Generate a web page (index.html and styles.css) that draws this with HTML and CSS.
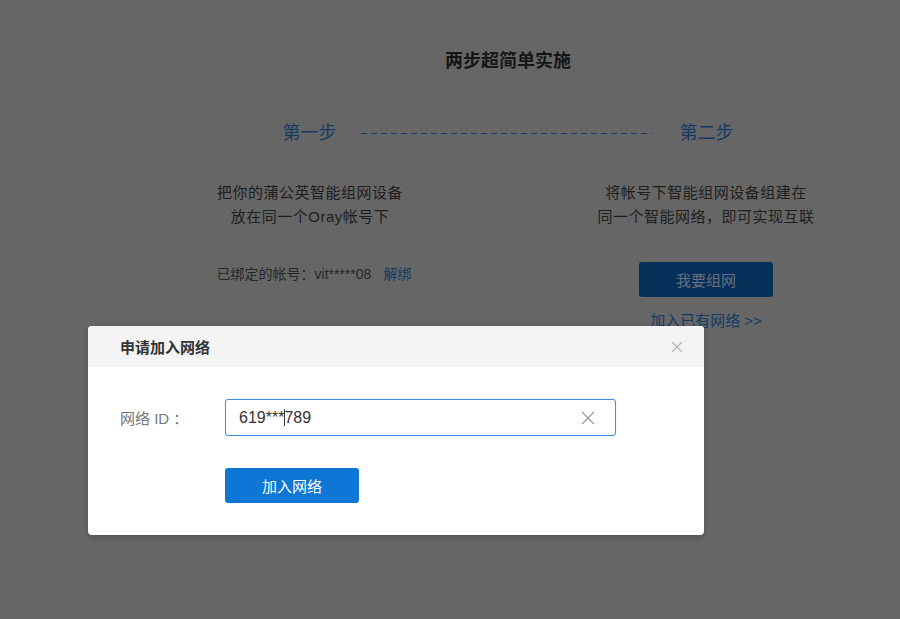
FILE: index.html
```html
<!DOCTYPE html>
<html lang="zh-CN">
<head>
    <meta charset="UTF-8">
    <title>智能组网</title>
    <link rel="stylesheet" href="styles.css">
</head>
<body>

    <div class="page">
        <h2 class="page-title">两步超简单实施</h2>

        <div class="steps">
            <span class="step-name">第一步</span>
            <span class="step-line"></span>
            <span class="step-name">第二步</span>
        </div>

        <div class="columns">
            <div class="col">
                <p class="desc">把你的蒲公英智能组网设备<br>放在同一个Oray帐号下</p>
                <p class="account">已绑定的帐号：vit*****08<a href="#" class="unbind">解绑</a></p>
            </div>
            <div class="col">
                <p class="desc">将帐号下智能组网设备组建在<br>同一个智能网络，即可实现互联</p>
                <button class="btn-create">我要组网</button>
                <a href="#" class="join-link">加入已有网络 &gt;&gt;</a>
            </div>
        </div>
    </div>

    <!-- Join network dialog -->
    <div class="dialog">
        <div class="dialog-head">
            <span class="dialog-title">申请加入网络</span>
            <span class="dialog-close">
                <svg width="12" height="12" viewBox="0 0 12 12"><path d="M1 1L11 11M11 1L1 11" stroke="#b4b4b4" stroke-width="1.3" fill="none"/></svg>
            </span>
        </div>
        <div class="dialog-body">
            <div class="form-row">
                <label class="form-label">网络 ID ：</label>
                <div class="field">
                    <span class="field-value">619***<span class="caret"></span>789</span>
                    <svg class="field-clear" width="14" height="14" viewBox="0 0 14 14"><path d="M1 1L13 13M13 1L1 13" stroke="#9a9a9a" stroke-width="1.3" fill="none"/></svg>
                </div>
            </div>
            <div class="form-row">
                <span class="form-label"></span>
                <button class="btn-join">加入网络</button>
            </div>
        </div>
    </div>

</body>
</html>
```

FILE: styles.css
```css
body {
    margin: 0;
    background-color: #666666;
    font-family: "Liberation Sans", "Noto Sans CJK SC", sans-serif;
    color: #1c1c1c;
    height: 619px;
    overflow: hidden;
}

.page {
    width: 656px;
    margin-left: 180px;
    padding-top: 49px;
}

.page-title {
    margin: 0;
    font-size: 18px;
    line-height: 24px;
    text-align: center;
    color: #161616;
}

/* Steps */
.steps {
    display: flex;
    align-items: center;
    justify-content: center;
    margin-top: 48px;
    line-height: 24px;
}

.step-name {
    font-size: 18px;
    color: #143a63;
}

.step-line {
    width: 291px;
    height: 1px;
    margin: 0 28px 0 24px;
    background-image: repeating-linear-gradient(to right, #183f6a 0 6px, transparent 6px 10px);
}

.columns {
    display: flex;
    justify-content: space-between;
    margin-top: 36px;
}

.col {
    width: 260px;
    display: flex;
    flex-direction: column;
    align-items: center;
}

.desc {
    margin: 0;
    font-size: 15px;
    letter-spacing: 0.5px;
    line-height: 24px;
    text-align: center;
    color: #1e1e1e;
}

.account {
    margin: 33px 0 0 8px;
    font-size: 14px;
    line-height: 24px;
    color: #262626;
}

.unbind {
    margin-left: 12px;
    color: #143a63;
    text-decoration: none;
}

.btn-create {
    margin-top: 33px;
    width: 134px;
    height: 35px;
    border: none;
    border-radius: 3px;
    background-color: #06305a;
    color: #66707e;
    font-family: inherit;
    font-size: 15px;
}

.join-link {
    margin-top: 12px;
    font-size: 15px;
    line-height: 24px;
    color: #143a63;
    text-decoration: none;
}

/* Dialog */
.dialog {
    position: absolute;
    left: 88px;
    top: 326px;
    width: 616px;
    height: 209px;
    background-color: #ffffff;
    border-radius: 4px;
    overflow: hidden;
    box-shadow: 0 2px 6px rgba(0, 0, 0, 0.2);
}

.dialog-head {
    display: flex;
    align-items: center;
    justify-content: space-between;
    height: 41px;
    padding: 0 21px 0 32px;
    background-color: #f4f4f4;
}

.dialog-title {
    font-size: 15px;
    font-weight: bold;
    color: #333333;
}

.dialog-close {
    display: flex;
}

.dialog-body {
    display: flex;
    flex-direction: column;
    gap: 32px;
    padding: 32px 32px 0;
}

.form-row {
    display: flex;
    align-items: center;
}

.form-label {
    width: 105px;
    font-size: 15px;
    color: #777777;
}

.field {
    display: flex;
    align-items: center;
    justify-content: space-between;
    box-sizing: border-box;
    width: 391px;
    height: 37px;
    padding: 0 20px 0 13px;
    border: 1px solid #3f8ee0;
    border-radius: 3px;
    box-shadow: 0 0 1px rgba(63, 142, 224, 0.6);
}

.field-value {
    font-size: 16px;
    color: #333333;
}

.caret {
    display: inline-block;
    width: 1px;
    height: 17px;
    margin-right: -1px;
    vertical-align: -3px;
    background-color: #333333;
}

.btn-join {
    width: 134px;
    height: 35px;
    border: none;
    border-radius: 3px;
    background-color: #0e76d4;
    color: #ffffff;
    font-family: inherit;
    font-size: 15px;
}
```
